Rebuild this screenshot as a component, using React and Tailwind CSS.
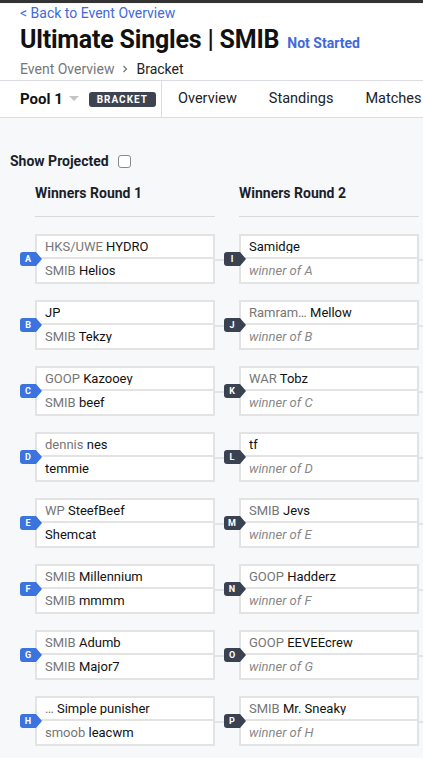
import React from 'react';

const round1 = [
  { id: 'A', top: ['HKS/UWE', 'HYDRO'], bottom: ['SMIB', 'Helios'] },
  { id: 'B', top: ['', 'JP'], bottom: ['SMIB', 'Tekzy'] },
  { id: 'C', top: ['GOOP', 'Kazooey'], bottom: ['SMIB', 'beef'] },
  { id: 'D', top: ['dennis', 'nes'], bottom: ['', 'temmie'] },
  { id: 'E', top: ['WP', 'SteefBeef'], bottom: ['', 'Shemcat'] },
  { id: 'F', top: ['SMIB', 'Millennium'], bottom: ['SMIB', 'mmmm'] },
  { id: 'G', top: ['SMIB', 'Adumb'], bottom: ['SMIB', 'Major7'] },
  { id: 'H', top: ['…', 'Simple punisher'], bottom: ['smoob', 'leacwm'] },
];

const round2 = [
  { id: 'I', top: ['', 'Samidge'], from: 'A' },
  { id: 'J', top: ['Ramram…', 'Mellow'], from: 'B' },
  { id: 'K', top: ['WAR', 'Tobz'], from: 'C' },
  { id: 'L', top: ['', 'tf'], from: 'D' },
  { id: 'M', top: ['SMIB', 'Jevs'], from: 'E' },
  { id: 'N', top: ['GOOP', 'Hadderz'], from: 'F' },
  { id: 'O', top: ['GOOP', 'EEVEEcrew'], from: 'G' },
  { id: 'P', top: ['SMIB', 'Mr. Sneaky'], from: 'H' },
];

function Entrant({ prefix, name }) {
  return (
    <span className="truncate">
      {prefix && <span className="text-[#767676]">{prefix} </span>}
      <span className="text-[#111]">{name}</span>
    </span>
  );
}

function Badge({ letter, dark }) {
  return (
    <div className="absolute left-[-15px] top-[18px] w-[22px] h-[14px]">
      <svg width="22" height="14" viewBox="0 0 22 14" className="absolute inset-0">
        <path d="M3 0 H16 L22 7 L16 14 H3 Q0 14 0 11 V3 Q0 0 3 0 Z" fill={dark ? '#3a4151' : '#3b74df'} />
      </svg>
      <span className="absolute left-0 w-[16px] top-0 h-[14px] flex items-center justify-center text-white text-[9px] font-bold leading-none">
        {letter}
      </span>
    </div>
  );
}

function MatchBox({ id, dark, children }) {
  return (
    <div className="relative h-[52px]">
      {/* connector */}
      <div className="absolute left-full top-[25px] w-[26px] h-[2px] bg-[#e3e3e3]" />
      <div className="border-2 border-[#e3e3e3] bg-white text-[13px] leading-none">{children}</div>
      <Badge letter={id} dark={dark} />
    </div>
  );
}

function Row({ children, last }) {
  return (
    <div className={`h-[23px] flex items-center pl-[8px] pr-2 ${last ? '' : 'border-b-2 border-[#e3e3e3]'}`}>
      {children}
    </div>
  );
}

export default function App() {
  return (
    <div className="w-[423px] h-[758px] overflow-hidden bg-[#f7f8fa] font-['Roboto',sans-serif]">
      <div className="h-[3px] bg-[#333]" />
      <div className="bg-white">
        <div className="px-5">
          <a className="block mt-[1px] text-[14px] leading-[18px] text-[#4169da]">&lt; Back to Event Overview</a>
          <div className="mt-[2px] h-[32px] flex items-baseline gap-2 leading-[32px] overflow-hidden">
            <h1 className="text-[25px] font-bold text-[#111] tracking-[-0.2px]">Ultimate Singles | SMIB</h1>
            <span className="text-[14px] font-bold text-[#4169da]">Not Started</span>
          </div>
          <div className="mt-[4px] h-[18px] flex items-center text-[14px] leading-[18px]">
            <span className="text-[#777]">Event Overview</span>
            <svg width="12" height="12" viewBox="0 0 12 12" className="mx-[5px]">
              <path d="M4.5 3 L7.5 6 L4.5 9" stroke="#777" strokeWidth="1.3" fill="none" />
            </svg>
            <span className="text-[#222]">Bracket</span>
          </div>
        </div>
        <div className="mt-[2px] flex h-[38px] border-y border-[#dcdde3] whitespace-nowrap">
          <div className="flex items-center pl-5 w-[162px] border-r border-[#dcdde3] shrink-0">
            <span className="text-[15px] font-bold text-[#111]">Pool 1</span>
            <svg width="10" height="6" viewBox="0 0 10 6" className="ml-[6px]">
              <path d="M0 0 H10 L5 5 Z" fill="#c4c4c4" />
            </svg>
            <span className="ml-[10px] h-[15px] w-[67px] flex items-center justify-center rounded-[3px] bg-[#3d4350] text-white text-[10px] font-bold tracking-[1px]">
              BRACKET
            </span>
          </div>
          {['Overview', 'Standings', 'Matches'].map((t) => (
            <div key={t} className="flex items-center px-4 text-[14.5px] text-[#222]">{t}</div>
          ))}
        </div>
      </div>

      <div className="pt-[33px]">
        <div className="flex items-center pl-[10px] h-[20px]">
          <span className="text-[14px] font-bold text-[#1a1f2b]">Show Projected</span>
          <span className="ml-[9px] w-[13px] h-[13px] rounded-[3px] border border-[#8a8a8a] bg-white" />
        </div>

        <div className="mt-[12px] pl-[35px] flex gap-[24px]">
          <div className="w-[180px] shrink-0">
            <div className="h-[34px] border-b border-[#d9d9d9] text-[14px] font-bold text-[#1a1f2b] leading-[20px]">Winners Round 1</div>
            <div className="mt-[17px] flex flex-col gap-[14px]">
              {round1.map((m) => (
                <MatchBox key={m.id} id={m.id}>
                  <Row><Entrant prefix={m.top[0]} name={m.top[1]} /></Row>
                  <Row last><Entrant prefix={m.bottom[0]} name={m.bottom[1]} /></Row>
                </MatchBox>
              ))}
            </div>
          </div>
          <div className="w-[180px] shrink-0">
            <div className="h-[34px] border-b border-[#d9d9d9] text-[14px] font-bold text-[#1a1f2b] leading-[20px]">Winners Round 2</div>
            <div className="mt-[17px] flex flex-col gap-[14px]">
              {round2.map((m) => (
                <MatchBox key={m.id} id={m.id} dark>
                  <Row><Entrant prefix={m.top[0]} name={m.top[1]} /></Row>
                  <Row last><span className="italic text-[#888]">winner of {m.from}</span></Row>
                </MatchBox>
              ))}
            </div>
          </div>
        </div>
      </div>
    </div>
  );
}
